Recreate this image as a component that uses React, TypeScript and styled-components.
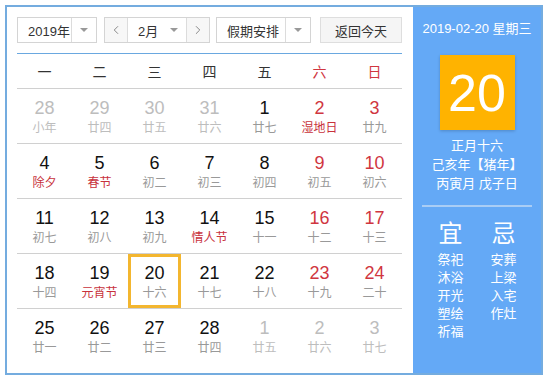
import styled, { createGlobalStyle } from "styled-components";
import { ChevronLeft, ChevronRight } from "lucide-react";

const GlobalStyle = createGlobalStyle`
  body {
    margin: 0;
    background: #ffffff;
    font-family: "Liberation Sans", "Noto Sans CJK SC", sans-serif;
  }
`;

const Widget = styled.div`
  margin: 5px;
  width: 538px;
  height: 370px;
  box-sizing: border-box;
  border: 2px solid #74acdf;
  display: flex;
`;

const Main = styled.div`
  width: 406px;
  padding: 10px 11px 0 10px;
  box-sizing: border-box;
`;

const Toolbar = styled.div`
  display: flex;
  align-items: center;
  height: 26px;
  margin-bottom: 10px;
`;

const Select = styled.div<{ $w: number; $ml?: number }>`
  width: ${(p) => p.$w}px;
  margin-left: ${(p) => p.$ml ?? 0}px;
  height: 26px;
  box-sizing: border-box;
  border: 1px solid #d4d4d4;
  display: flex;
  align-items: stretch;
  font-size: 13px;
  color: #333;
  background: #fff;
`;

const SelectText = styled.div`
  flex: 1;
  display: flex;
  align-items: center;
  padding-left: 10px;
`;

const Caret = styled.div`
  width: 24px;
  border-left: 1px solid #dcdcdc;
  display: flex;
  align-items: center;
  justify-content: center;
  &::after {
    content: "";
    border-left: 4px solid transparent;
    border-right: 4px solid transparent;
    border-top: 4px solid #999;
  }
`;

const MonthCaret = styled(Caret)`
  border-left: none;
`;

const NavButton = styled.div<{ $side: "l" | "r" }>`
  width: 22px;
  display: flex;
  align-items: center;
  justify-content: center;
  background: #f7f7f7;
  color: #666;
  ${(p) => (p.$side === "l" ? "border-right" : "border-left")}: 1px solid #dcdcdc;
`;

const TodayButton = styled.div`
  width: 82px;
  margin-left: 9px;
  height: 26px;
  box-sizing: border-box;
  border: 1px solid #dedede;
  background: #f5f5f5;
  display: flex;
  align-items: center;
  justify-content: center;
  font-size: 13px;
  color: #333;
`;

const Grid = styled.div`
  border-top: 1px solid #6aa8e0;
  display: grid;
  grid-template-columns: repeat(7, 55px);
`;

const WeekHead = styled.div<{ $red?: boolean }>`
  height: 34px;
  border-bottom: 1px solid #d0d0d0;
  display: flex;
  align-items: center;
  justify-content: center;
  font-size: 14px;
  color: ${(p) => (p.$red ? "#d0363f" : "#333")};
`;

const Cell = styled.div<{ $last?: boolean }>`
  height: 54px;
  border-bottom: ${(p) => (p.$last ? "none" : "1px solid #d0d0d0")};
  padding: 0 1px;
`;

const CellInner = styled.div<{ $sel?: boolean }>`
  height: 100%;
  box-sizing: border-box;
  border: 3px solid ${(p) => (p.$sel ? "#f3b62f" : "transparent")};
  display: flex;
  flex-direction: column;
  align-items: center;
  justify-content: center;
  padding-top: 1px;
`;

const DayNum = styled.div<{ $tone: string }>`
  font-size: 18px;
  line-height: 20px;
  color: ${(p) => p.$tone};
`;

const Lunar = styled.div<{ $tone: string }>`
  font-size: 12px;
  line-height: 16px;
  margin-top: 2px;
  color: ${(p) => p.$tone};
`;

const Side = styled.div`
  flex: 1;
  background: #64a9f6;
  color: #fff;
  display: flex;
  flex-direction: column;
  align-items: center;
`;

const SideDate = styled.div`
  margin-top: 14px;
  font-size: 13px;
  line-height: 16px;
`;

const DayBox = styled.div`
  margin-top: 18px;
  width: 75px;
  height: 75px;
  background: #ffb300;
  box-shadow: 0 1px 3px rgba(0, 0, 0, 0.2);
  display: flex;
  align-items: center;
  justify-content: center;
  font-size: 52px;
  font-family: "Liberation Sans", sans-serif;
`;

const LunarInfo = styled.div`
  margin-top: 6px;
  font-size: 13px;
  line-height: 19px;
  text-align: center;
`;

const Divider = styled.div`
  margin-top: 12px;
  width: 110px;
  height: 2px;
  background: #a9cdf5;
`;

const Almanac = styled.div`
  margin-top: 12px;
  display: flex;
  gap: 27px;
`;

const AlmanacCol = styled.div`
  display: flex;
  flex-direction: column;
  align-items: center;
`;

const AlmanacTitle = styled.div`
  font-size: 24px;
  line-height: 30px;
  margin-bottom: 2px;
`;

const AlmanacItem = styled.div`
  font-size: 13px;
  line-height: 18px;
`;

type Day = { n: number; l: string; other?: boolean; hol?: boolean; sel?: boolean };

const days: Day[] = [
  { n: 28, l: "小年", other: true },
  { n: 29, l: "廿四", other: true },
  { n: 30, l: "廿五", other: true },
  { n: 31, l: "廿六", other: true },
  { n: 1, l: "廿七" },
  { n: 2, l: "湿地日", hol: true },
  { n: 3, l: "廿九" },
  { n: 4, l: "除夕", hol: true },
  { n: 5, l: "春节", hol: true },
  { n: 6, l: "初二" },
  { n: 7, l: "初三" },
  { n: 8, l: "初四" },
  { n: 9, l: "初五" },
  { n: 10, l: "初六" },
  { n: 11, l: "初七" },
  { n: 12, l: "初八" },
  { n: 13, l: "初九" },
  { n: 14, l: "情人节", hol: true },
  { n: 15, l: "十一" },
  { n: 16, l: "十二" },
  { n: 17, l: "十三" },
  { n: 18, l: "十四" },
  { n: 19, l: "元宵节", hol: true },
  { n: 20, l: "十六", sel: true },
  { n: 21, l: "十七" },
  { n: 22, l: "十八" },
  { n: 23, l: "十九" },
  { n: 24, l: "二十" },
  { n: 25, l: "廿一" },
  { n: 26, l: "廿二" },
  { n: 27, l: "廿三" },
  { n: 28, l: "廿四" },
  { n: 1, l: "廿五", other: true },
  { n: 2, l: "廿六", other: true },
  { n: 3, l: "廿七", other: true },
];

const weekNames = ["一", "二", "三", "四", "五", "六", "日"];

function numTone(d: Day, i: number) {
  if (d.other) return "#bdbdbd";
  if (i % 7 >= 5) return "#d0363f";
  return "#111";
}

function lunarTone(d: Day) {
  if (d.other) return "#bdbdbd";
  if (d.hol) return "#c8323c";
  return "#999";
}

export default function App() {
  return (
    <>
      <GlobalStyle />
      <Widget>
        <Main>
          <Toolbar>
            <Select $w={80}>
              <SelectText>2019年</SelectText>
              <Caret />
            </Select>
            <Select $w={106} $ml={7}>
              <NavButton $side="l">
                <ChevronLeft size={14} strokeWidth={1.3} />
              </NavButton>
              <SelectText>2月</SelectText>
              <MonthCaret />
              <NavButton $side="r">
                <ChevronRight size={14} strokeWidth={1.3} />
              </NavButton>
            </Select>
            <Select $w={95} $ml={6}>
              <SelectText>假期安排</SelectText>
              <Caret />
            </Select>
            <TodayButton>返回今天</TodayButton>
          </Toolbar>
          <Grid>
            {weekNames.map((w, i) => (
              <WeekHead key={w} $red={i >= 5}>
                {w}
              </WeekHead>
            ))}
            {days.map((d, i) => (
              <Cell key={i} $last={i >= 28}>
                <CellInner $sel={d.sel}>
                  <DayNum $tone={numTone(d, i)}>{d.n}</DayNum>
                  <Lunar $tone={lunarTone(d)}>{d.l}</Lunar>
                </CellInner>
              </Cell>
            ))}
          </Grid>
        </Main>
        <Side>
          <SideDate>2019-02-20 星期三</SideDate>
          <DayBox>20</DayBox>
          <LunarInfo>
            <div>正月十六</div>
            <div>己亥年【猪年】</div>
            <div>丙寅月 戊子日</div>
          </LunarInfo>
          <Divider />
          <Almanac>
            <AlmanacCol>
              <AlmanacTitle>宜</AlmanacTitle>
              {["祭祀", "沐浴", "开光", "塑绘", "祈福"].map((t) => (
                <AlmanacItem key={t}>{t}</AlmanacItem>
              ))}
            </AlmanacCol>
            <AlmanacCol>
              <AlmanacTitle>忌</AlmanacTitle>
              {["安葬", "上梁", "入宅", "作灶"].map((t) => (
                <AlmanacItem key={t}>{t}</AlmanacItem>
              ))}
            </AlmanacCol>
          </Almanac>
        </Side>
      </Widget>
    </>
  );
}
